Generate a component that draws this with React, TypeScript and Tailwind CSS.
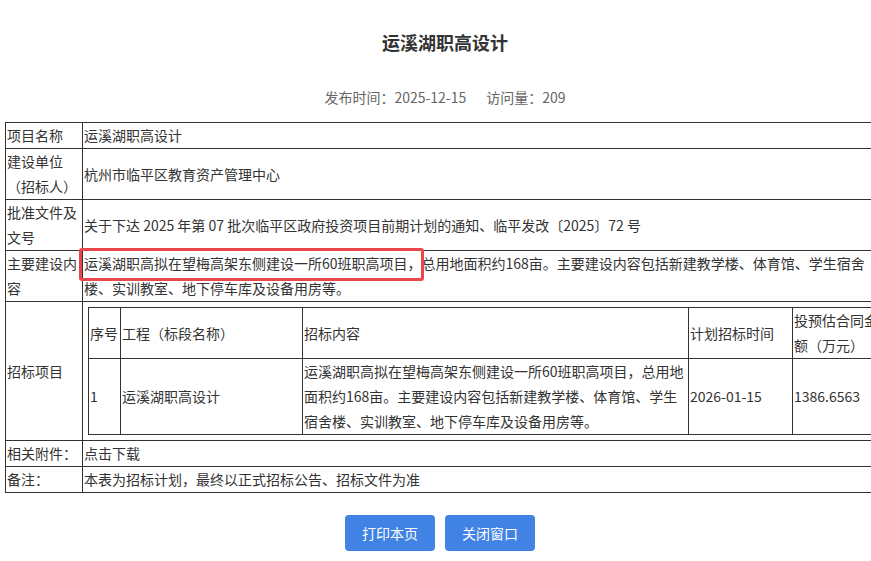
import React from "react";

const font = {
  fontFamily: '"Noto Sans CJK SC", "Noto Sans", sans-serif',
};

const Cell = ({ children, className = "" }: { children: React.ReactNode; className?: string }) => (
  <td className={`border border-[#333] px-[1px] py-0 align-middle ${className}`}>{children}</td>
);

const BidTable = () => {
  return (
    <table className="w-[796px] table-fixed border-collapse">
      <colgroup>
        <col className="w-[32px]" />
        <col className="w-[182px]" />
        <col className="w-[386px]" />
        <col className="w-[104px]" />
        <col className="w-[92px]" />
      </colgroup>
      <tbody>
        <tr>
          <Cell>序号</Cell>
          <Cell>工程（标段名称）</Cell>
          <Cell>招标内容</Cell>
          <Cell>计划招标时间</Cell>
          <Cell>投预估合同金额（万元）</Cell>
        </tr>
        <tr>
          <Cell>1</Cell>
          <Cell>运溪湖职高设计</Cell>
          <Cell>
            运溪湖职高拟在望梅高架东侧建设一所60班职高项目，总用地面积约168亩。主要建设内容包括新建教学楼、体育馆、学生宿舍楼、实训教室、地下停车库及设备用房等。
          </Cell>
          <Cell>2026-01-15</Cell>
          <Cell>1386.6563</Cell>
        </tr>
      </tbody>
    </table>
  );
};

export default function App() {
  return (
    <div className="w-full overflow-hidden bg-white text-[#333]" style={font}>
      <div className="w-[890px]">
        <h1 className="pt-[30px] text-center text-[18px] font-bold leading-[25px]">运溪湖职高设计</h1>
        <p className="mt-[30px] text-center text-[14px] leading-[25px] text-[#666]">
          发布时间：2025-12-15<span className="ml-[20px]">访问量：209</span>
        </p>

        <table className="mt-[12px] ml-[5px] w-[873px] table-fixed border-collapse text-[14px] leading-[25px]">
          <colgroup>
            <col className="w-[77px]" />
            <col />
          </colgroup>
          <tbody>
            <tr>
              <Cell>项目名称</Cell>
              <Cell>运溪湖职高设计</Cell>
            </tr>
            <tr>
              <Cell>建设单位（招标人）</Cell>
              <Cell>杭州市临平区教育资产管理中心</Cell>
            </tr>
            <tr>
              <Cell>批准文件及文号</Cell>
              <Cell>关于下达 2025 年第 07 批次临平区政府投资项目前期计划的通知、临平发改〔2025〕72 号</Cell>
            </tr>
            <tr>
              <Cell>主要建设内容</Cell>
              <Cell>
                <span className="relative">
                  运溪湖职高拟在望梅高架东侧建设一所60班职高项目，
                  <span className="pointer-events-none absolute -left-[5px] -right-[2px] -top-[5px] -bottom-[8px] rounded-[3px] border-[3px] border-[#e8474b]" />
                </span>
                总用地面积约168亩。主要建设内容包括新建教学楼、体育馆、学生宿舍楼、实训教室、地下停车库及设备用房等。
              </Cell>
            </tr>
            <tr>
              <Cell>招标项目</Cell>
              <td className="border border-[#333] p-[5px] align-middle">
                <BidTable />
              </td>
            </tr>
            <tr>
              <Cell>相关附件：</Cell>
              <Cell>点击下载</Cell>
            </tr>
            <tr>
              <Cell>备注：</Cell>
              <Cell>本表为招标计划，最终以正式招标公告、招标文件为准</Cell>
            </tr>
          </tbody>
        </table>

        <div className="mt-[22px] flex w-[880px] justify-center gap-[10px] pb-[9px]">
          <button className="h-[36px] w-[90px] rounded-[4px] bg-[#4083e4] text-[14px] text-white">打印本页</button>
          <button className="h-[36px] w-[90px] rounded-[4px] bg-[#4083e4] text-[14px] text-white">关闭窗口</button>
        </div>
      </div>
    </div>
  );
}
